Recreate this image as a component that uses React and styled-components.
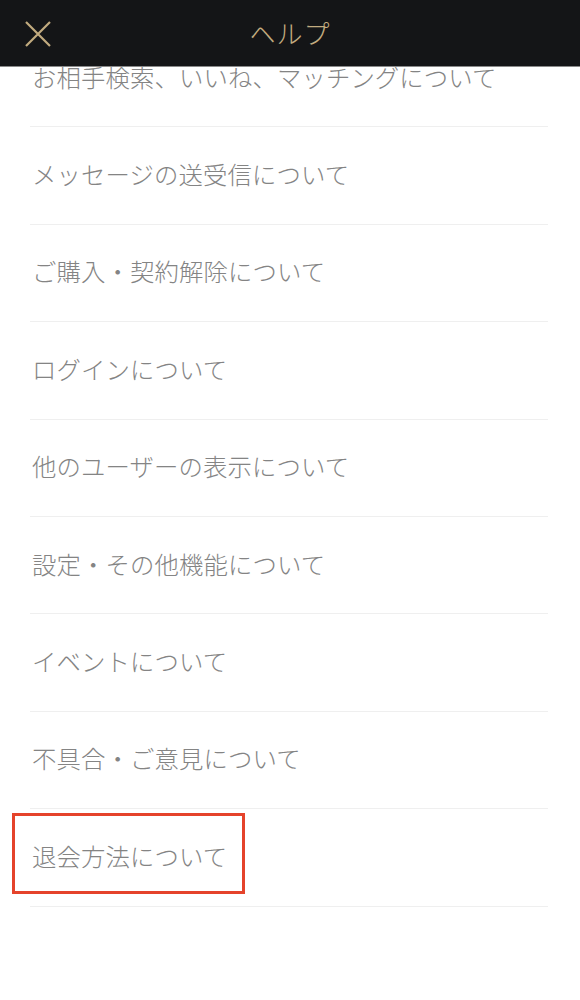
import React from "react";
import styled, { createGlobalStyle } from "styled-components";

const Global = createGlobalStyle`
  html, body { margin: 0; padding: 0; background: #ffffff; }
  body { font-family: "Noto Sans CJK JP", "Noto Sans", sans-serif; }
  * { box-sizing: border-box; }
`;

const Screen = styled.div`
  position: relative;
  width: 580px;
  height: 1000px;
  overflow: hidden;
  background: #ffffff;
`;

const Header = styled.header`
  position: absolute;
  top: 0;
  left: 0;
  right: 0;
  height: 67px;
  background: #141517;
  border-bottom: 1px solid #8a8a8a;
  display: flex;
  align-items: center;
  justify-content: center;
  z-index: 2;
`;

const CloseButton = styled.button`
  position: absolute;
  left: 22px;
  top: 18px;
  width: 32px;
  height: 32px;
  padding: 0;
  border: none;
  background: transparent;
  display: flex;
  align-items: center;
  justify-content: center;
`;

const Title = styled.h1`
  margin: 0 0 2px;
  font-size: 26px;
  font-weight: 300;
  color: #c2ab7f;
  letter-spacing: 1px;
`;

const List = styled.ul`
  list-style: none;
  margin: 0;
  padding: 30px 32px 0 30px;
`;

const Row = styled.li`
  height: 97.4px;
  border-bottom: 1px solid #efefef;
  display: flex;
  align-items: center;
  padding-left: 2px;
  padding-bottom: 4px;
  position: relative;
`;

const Label = styled.span`
  font-size: 24.4px;
  font-weight: 300;
  color: #848484;
  letter-spacing: 0.1px;
  white-space: nowrap;
`;

const Highlight = styled.div`
  position: absolute;
  left: -18px;
  top: 4px;
  width: 233px;
  height: 81px;
  border: 3px solid #e5432b;
  pointer-events: none;
`;

const items = [
  "お相手検索、いいね、マッチングについて",
  "メッセージの送受信について",
  "ご購入・契約解除について",
  "ログインについて",
  "他のユーザーの表示について",
  "設定・その他機能について",
  "イベントについて",
  "不具合・ご意見について",
  "退会方法について",
];

export default function App() {
  return (
    <Screen>
      <Global />
      <Header>
        <CloseButton aria-label="閉じる">
          <svg width="28" height="28" viewBox="0 0 28 28">
            <path d="M2 2 L26 26 M26 2 L2 26" stroke="#c2ab7f" strokeWidth="2.2" fill="none" />
          </svg>
        </CloseButton>
        <Title>ヘルプ</Title>
      </Header>
      <List>
        {items.map((t, i) => (
          <Row key={t}>
            <Label>{t}</Label>
            {i === items.length - 1 && <Highlight />}
          </Row>
        ))}
      </List>
    </Screen>
  );
}
